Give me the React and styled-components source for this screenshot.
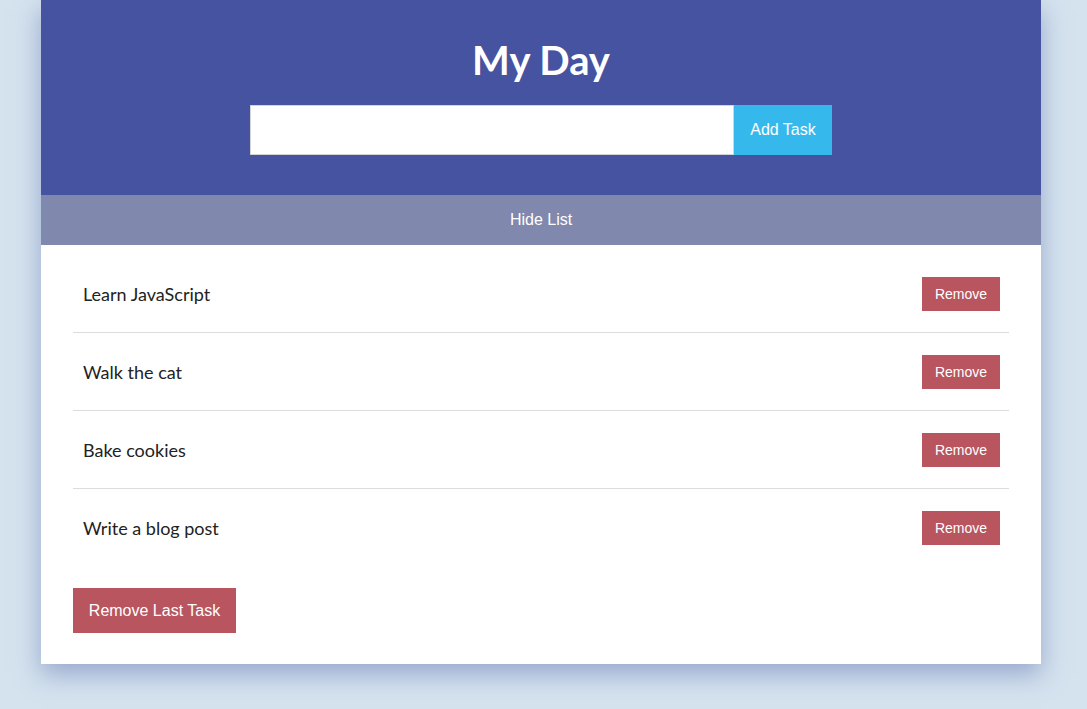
import React, { useState } from "react";
import styled, { createGlobalStyle } from "styled-components";

const GlobalStyle = createGlobalStyle`
  body {
    margin: 0;
    padding-bottom: 45px;
    background: #d5e3ef;
    font-family: "Liberation Sans", Arial, sans-serif;
  }
`;

const Card = styled.div`
  width: 1000px;
  margin-left: 41px;
  background: #fff;
  box-shadow: 0 10px 24px rgba(90, 110, 170, 0.5);
`;

const Header = styled.header`
  background: #4553a0;
  height: 195px;
  box-sizing: border-box;
  padding-top: 35px;
  display: flex;
  flex-direction: column;
  align-items: center;
`;

const Title = styled.h1`
  margin: 0;
  color: #fff;
  font-family: Lato, sans-serif;
  font-weight: 700;
  font-size: 40px;
  line-height: 50px;
`;

const Form = styled.form`
  display: flex;
  margin-top: 20px;
`;

const Input = styled.input`
  width: 484px;
  height: 50px;
  box-sizing: border-box;
  border: 1px solid #d4d4d4;
  outline: none;
  padding: 0 12px;
  font-size: 16px;
`;

const Button = styled.button`
  border: none;
  color: #fff;
  font-family: "Liberation Sans", Arial, sans-serif;
  cursor: pointer;
  background: ${(p) => p.$bg || "#b9555f"};
  font-size: ${(p) => p.$size || 16}px;
  width: ${(p) => p.$w}px;
  height: ${(p) => p.$h}px;
  padding: 0;
`;

const Toggle = styled.div`
  background: #8088ad;
  color: #fff;
  height: 50px;
  display: flex;
  align-items: center;
  justify-content: center;
  font-size: 16px;
`;

const Body = styled.div`
  padding: 10px 32px 31px;
`;

const List = styled.ul`
  list-style: none;
  margin: 0;
  padding: 0;
`;

const Row = styled.li`
  height: 78px;
  box-sizing: border-box;
  display: flex;
  align-items: center;
  justify-content: space-between;
  padding: 0 9px 0 10px;
  border-bottom: 1px solid #dcdcdc;
  font-family: Lato, sans-serif;
  font-size: 18px;
  color: #222;
  &:last-child {
    border-bottom: none;
  }
`;

const Footer = styled.div`
  margin-top: 21px;
`;

export default function App() {
  const [tasks] = useState([
    "Learn JavaScript",
    "Walk the cat",
    "Bake cookies",
    "Write a blog post",
  ]);

  return (
    <>
      <GlobalStyle />
      <Card>
        <Header>
          <Title>My Day</Title>
          <Form onSubmit={(e) => e.preventDefault()}>
            <Input type="text" />
            <Button $bg="#35b9ec" $w={98} $h={50}>
              Add Task
            </Button>
          </Form>
        </Header>
        <Toggle>Hide List</Toggle>
        <Body>
          <List>
            {tasks.map((t) => (
              <Row key={t}>
                <span>{t}</span>
                <Button $w={78} $h={34} $size={14}>
                  Remove
                </Button>
              </Row>
            ))}
          </List>
          <Footer>
            <Button $w={163} $h={45}>
              Remove Last Task
            </Button>
          </Footer>
        </Body>
      </Card>
    </>
  );
}
